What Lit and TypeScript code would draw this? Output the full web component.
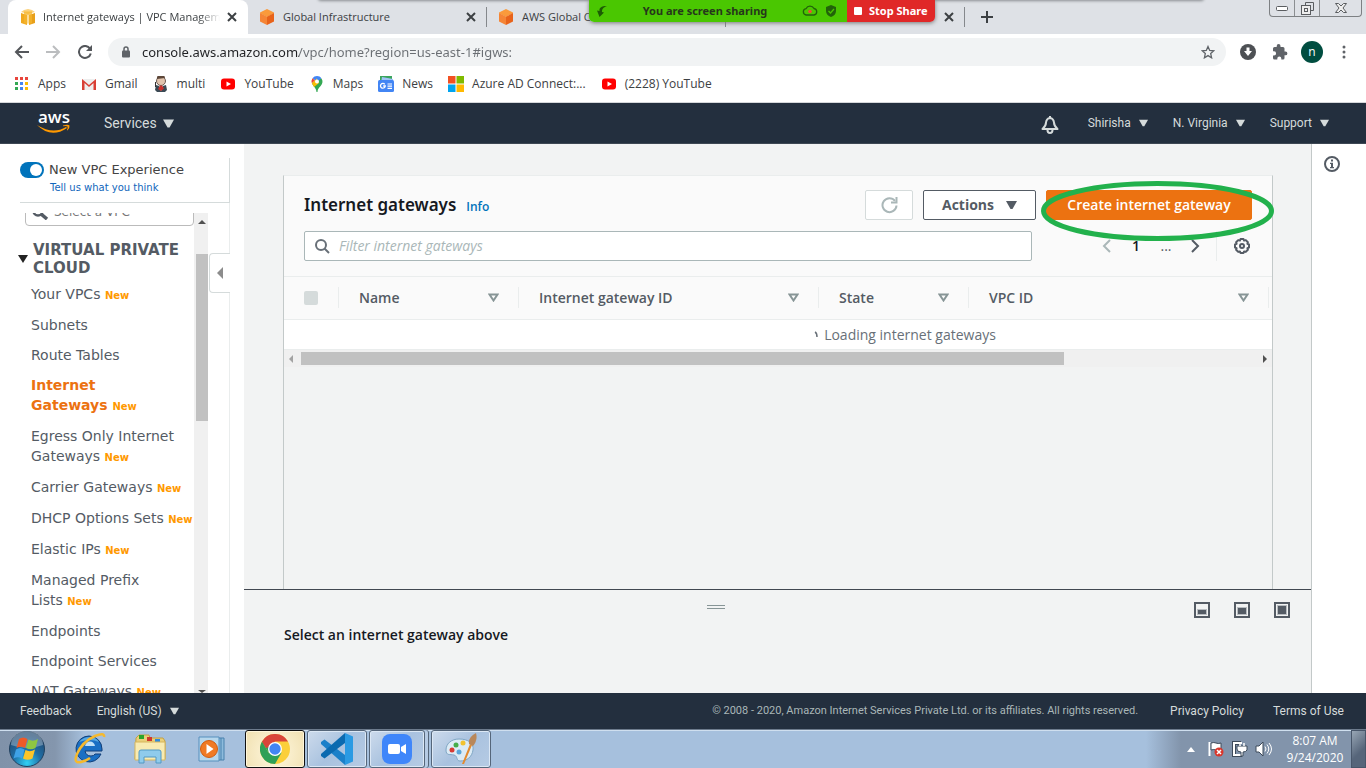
import { LitElement, html, css, svg, nothing } from "lit";
import { customElement, state } from "lit/decorators.js";
import { classMap } from "lit/directives/class-map.js";

const icon = (w: number, h: number, body: unknown) =>
  html`<svg width=${w} height=${h} viewBox="0 0 ${w} ${h}" fill="none" aria-hidden="true">${body}</svg>`;

const caret = (w = 11, h = 8) =>
  html`<svg width=${w} height=${h} viewBox="0 0 11 8" aria-hidden="true"><path d="M0 0h11L6.5 8h-2z" fill="currentColor" /></svg>`;

const sortCaret = () => icon(11, 9, svg`<path d="M1.5 1.5h8l-4 6z" stroke="#879596" stroke-width="2"/>`);

const closeX = () => icon(10, 10, svg`<path d="M1 1l8 8M9 1l-8 8" stroke="#3c4043" stroke-width="2"/>`);

const cube = (top: string, left: string, right: string) =>
  icon(16, 16, svg`<path d="M8 0l7 3.6v.6L8 8 1 4.2v-.6z" fill=${top}/><path d="M1 4l7 3.8V16l-7-3.6z" fill=${left}/><path d="M15 4L8 7.800V16l7-3.600z" fill=${right}/>`);

const awsCube = () => cube("#fa9a3b", "#f58536", "#e8631b");

const vpcBox = () =>
  icon(16, 16, svg`<path d="M1 3l3-2 4-1 4 1 3 2-7 2z" fill="#fbd27c"/><path d="M1 4l6 2v10l-6-2z" fill="#f0a91f"/><path d="M15 4L9 6v10l6-2z" fill="#e8a01a"/><path d="M4 2.500h8v12H4z" fill="#f5b62f" opacity=".75"/><path d="M7.500 6h1v9h-1z" fill="#fff2cf"/>`);

const youtube = () =>
  icon(16, 16, svg`<rect x="1" y="2.500" width="14" height="11" rx="3" fill="#f00"/><path d="M6.500 5.500v5L11 8z" fill="#fff"/>`);

const bookmarks: { label: string; gap: string; glyph: () => unknown }[] = [
  {
    label: "Apps",
    gap: "g0",
    glyph: () =>
      icon(14, 14, [
        ["#e8453c", 1, 0], ["#e8453c", 6, 0], ["#e8453c", 11, 0],
        ["#34a853", 1, 5], ["#4285f4", 6, 5], ["#fbbc04", 11, 5],
        ["#34a853", 1, 10], ["#4285f4", 6, 10], ["#fbbc04", 11, 10],
      ].map(([c, x, y]) => svg`<rect x=${x} y=${y} width="3" height="3" fill=${c}/>`)),
  },
  {
    label: "Gmail",
    gap: "g1",
    glyph: () =>
      icon(16, 16, svg`<path d="M1 3h14v11H1z" fill="#eee"/><path d="M1 14V3l7 6 7-6v11h-2.500V7L8 11 3.500 7v7z" fill="#d93f35"/>`),
  },
  {
    label: "multi",
    gap: "g1",
    glyph: () =>
      icon(16, 16, svg`<circle cx="8" cy="5" r="4.500" fill="#e2c4ae" stroke="#6b5a52"/><path d="M4 3a4 4 0 018-1l-4 .5z" fill="#5c4638"/><path d="M3 9l3 1 2 5 2-5 3-1 1 5-2 2H4l-2-2z" fill="#3b4a55"/><path d="M7 9.500h2l2 3-3 2.500-3-2z" fill="#c9302c"/><path d="M2.500 6v5" stroke="#333"/>`),
  },
  { label: "YouTube", gap: "g1", glyph: youtube },
  {
    label: "Maps",
    gap: "g1",
    glyph: () =>
      icon(16, 16, svg`<path d="M8 0a5.500 5.500 0 00-4.500 2.300L8 6z" fill="#4285f4"/><path d="M3.500 2.300a5.500 5.500 0 00-.6 5L6 4.500z" fill="#ea4335"/><path d="M2.900 7.300L12 1.900a5.500 5.500 0 01.9 6C11.500 11 8.800 11.500 8.500 16h-1C7.300 12 4.500 11 2.900 7.300z" fill="#34a853"/><path d="M2.900 7.300l5-4.800L10 7l-5 4z" fill="#fbbc04"/><path d="M8 0c2 0 3.400.8 4.300 2.200L8 6z" fill="#4285f4"/><circle cx="8" cy="5.500" r="2" fill="#fff"/>`),
  },
  {
    label: "News",
    gap: "g1",
    glyph: () =>
      icon(16, 16, svg`<path d="M2 0h12v5H2z" fill="#3ba55d"/><path d="M4 1l11 2v4H3z" fill="#9fc2f7"/><rect y="4" width="16" height="12" rx="1.500" fill="#4285f4"/><path d="M6.800 8.300A2.400 2.400 0 107.300 10H5.200" stroke="#fff" stroke-width="1.300"/><path d="M9.500 8h4.500M9.500 10.200h4.500M9.500 12.400h4.500" stroke="#fff" stroke-width="1.200"/>`),
  },
  {
    label: "Azure AD Connect:...",
    gap: "g1",
    glyph: () =>
      icon(16, 16, svg`<path d="M0 0h7.500v7.500H0z" fill="#f25022"/><path d="M8.500 0H16v7.500H8.500z" fill="#7fba00"/><path d="M0 8.500h7.500V16H0z" fill="#00a4ef"/><path d="M8.500 8.500H16V16H8.500z" fill="#ffb900"/>`),
  },
  { label: "(2228) YouTube", gap: "g1", glyph: youtube },
];

const links: { label: string; fresh?: boolean; current?: boolean }[] = [
  { label: "Your VPCs", fresh: true },
  { label: "Subnets" },
  { label: "Route Tables" },
  { label: "Internet Gateways", fresh: true, current: true },
  { label: "Egress Only Internet Gateways", fresh: true },
  { label: "Carrier Gateways", fresh: true },
  { label: "DHCP Options Sets", fresh: true },
  { label: "Elastic IPs", fresh: true },
  { label: "Managed Prefix Lists", fresh: true },
  { label: "Endpoints" },
  { label: "Endpoint Services" },
  { label: "NAT Gateways", fresh: true },
];

const columns = [
  { label: "Name", cls: "c-name" },
  { label: "Internet gateway ID", cls: "c-id" },
  { label: "State", cls: "c-state" },
  { label: "VPC ID", cls: "c-vpc" },
];

const reset = css`
  *, *::before, *::after { box-sizing: border-box; }
  button, input { font: inherit; color: inherit; margin: 0; }
  button { background: none; border: 0; padding: 0; display: flex; align-items: center; cursor: pointer; white-space: nowrap; }
  a { color: inherit; text-decoration: none; }
  svg { display: block; flex: none; }
  h1, h2, p, ul { margin: 0; padding: 0; list-style: none; }
`;

@customElement("browser-chrome")
class BrowserChrome extends LitElement {
  static styles = [reset, css`
    :host { display: block; position: relative; flex: none; font: 12px/16px "Open Sans", "Noto Sans", sans-serif; color: #3c4043; background: #fff; border-bottom: 1px solid #d5d7da; }
    .tabs { display: flex; height: 34px; background: #dee1e6; padding-left: 8px; align-items: center; }
    .tab { flex: 0 1 239px; min-width: 0; height: 34px; display: flex; align-items: center; gap: 8px; padding: 0 11px 0 11px; position: relative; }
    .tab.on { flex-basis: 240px; background: #fff; border-radius: 8px 8px 0 0; padding-left: 12px; gap: 7px; }
    .tab.sep::after { content: ""; position: absolute; right: 0; top: 7px; width: 1px; height: 20px; background: #85888c; }
    .name { flex: 1; overflow: hidden; white-space: nowrap; font-size: 11px; }
    .on .name { -webkit-mask-image: linear-gradient(90deg, #000 88%, transparent); mask-image: linear-gradient(90deg, #000 88%, transparent); }
    .plus { padding: 0 16px; }
    .window { position: absolute; right: 4px; top: 0; display: flex; border: 1px solid #7d8083; border-top: 0; border-radius: 0 0 4px 4px; height: 17px; }
    .window button { width: 25px; justify-content: center; border-right: 1px solid #8b8e91; }
    .window button:last-child { width: 41px; border: 0; }
    .drop { position: absolute; left: 318px; right: 162px; top: -6px; height: 6px; box-shadow: 0 1px 3px #8a8d91; border-radius: 4px; }
    .share { position: absolute; left: 589px; top: 0; height: 22px; display: flex; border-radius: 0 0 5px 5px; overflow: hidden; font: 700 11px/16px "Noto Sans", sans-serif; box-shadow: 0 1px 4px #777; }
    .live { width: 258px; background: #4ac701; color: #26371c; display: flex; align-items: center; padding: 0 11px 0 7px; }
    .live span { flex: 1; text-align: center; }
    .live .pair { display: flex; gap: 8px; }
    .stop { width: 88px; background: #e02828; color: #fff; padding-left: 7px; gap: 7px; }
    .bar { display: flex; align-items: center; height: 36px; padding: 0 6px 0 14px; }
    .back { width: 32px; }
    .reload { width: 30px; }
    .omni { flex: 1; display: flex; align-items: center; gap: 12px; height: 28px; border-radius: 14px; background: #f1f3f4; padding: 0 11px 0 14px; margin-right: 6px; }
    .url { flex: 1; min-width: 0; height: 24px; border: 0; outline: 0; padding: 0; font: 13px/24px "Noto Sans", sans-serif; color: transparent; background: linear-gradient(90deg, #202124 157px, #6a6e73 157px); -webkit-background-clip: text; background-clip: text; }
    .tools { display: flex; align-items: center; }
    .tools button { justify-content: center; width: 32px; }
    .tools .me { width: 22px; height: 22px; margin: 0 5px; border-radius: 50%; background: #004d40; color: #fff; }
    .marks { display: flex; height: 32px; align-items: center; padding: 0 0 4px 14px; }
    .marks a { display: flex; align-items: center; gap: 8px; white-space: nowrap; }
    .marks .g0 { gap: 10px; }
    .marks .g1 { margin-left: 15px; }
  `];

  render() {
    return html`
      <div class="tabs">
        <div class="tab on">${vpcBox()}<span class="name">Internet gateways | VPC Management</span><button aria-label="Close tab">${closeX()}</button></div>
        <div class="tab sep">${awsCube()}<span class="name">Global Infrastructure</span><button aria-label="Close tab">${closeX()}</button></div>
        <div class="tab sep">${awsCube()}<span class="name">AWS Global Cloud</span></div>
        <div class="tab sep"><span class="name"></span><button aria-label="Close tab">${closeX()}</button></div>
        <button class="plus" aria-label="New tab">${icon(12, 12, svg`<path d="M6 0v12M0 6h12" stroke="#3c4043" stroke-width="2"/>`)}</button>
      </div>
      <div class="drop"></div>
      <div class="window">
        <button aria-label="Minimize">${icon(12, 6, svg`<rect x=".5" y="1.500" width="11" height="4" rx="1" stroke="#5a5d60" fill="#fff"/>`)}</button>
        <button aria-label="Restore">${icon(13, 13, svg`<path d="M4.500 3.500v-3h8v8h-3" stroke="#5a5d60"/><rect x=".5" y="3.500" width="9" height="9" stroke="#5a5d60" fill="#eee"/><rect x="3.500" y="6.500" width="3" height="3" stroke="#5a5d60"/>`)}</button>
        <button aria-label="Close window">${icon(12, 10, svg`<path d="M.5.5h3L6 3 8.500.5h3L8 5l3.500 4.500h-3L6 7 3.500 9.500h-3L4 5z" stroke="#5a5d60" fill="#eee"/>`)}</button>
      </div>
      <div class="share">
        <div class="live">
          ${icon(12, 11, svg`<path d="M11 0C5 0 3 2 3.500 5L1 4.500 3.500 11 8 6.500 6 6c0-3 1-4.500 5-6z" fill="#1d5c05"/>`)}
          <span>You are screen sharing</span>
          <div class="pair">
            ${icon(16, 11, svg`<path d="M4 10a3.200 3.200 0 010-6.300A4.500 4.500 0 0112 3.500a3.300 3.300 0 010 6.500z" stroke="#22630a" stroke-width="1.300"/><circle cx="8" cy="6.500" r="1.800" fill="#f04a3a"/>`)}
            ${icon(10, 12, svg`<path d="M5 0l5 2v4c0 3-2 5-5 6-3-1-5-3-5-6V2z" fill="#22630a"/><path d="M2.500 6l2 2 3.500-4" stroke="#4ac701" stroke-width="1.300"/>`)}
          </div>
        </div>
        <button class="stop">${icon(8, 8, svg`<rect width="8" height="8" rx="1" fill="#fff"/>`)}Stop Share</button>
      </div>
      <div class="bar">
        <button class="back" aria-label="Back">${icon(16, 14, svg`<path d="M15 7H2M8 1L2 7l6 6" stroke="#54575b" stroke-width="2"/>`)}</button>
        <button class="back" aria-label="Forward">${icon(16, 14, svg`<path d="M0 7h13M7 1l6 6-6 6" stroke="#bbbdbf" stroke-width="2"/>`)}</button>
        <button class="reload" aria-label="Reload">${icon(14, 14, svg`<path d="M12 3.600A6 6 0 1012.800 8.500" stroke="#54575b" stroke-width="2"/><path d="M14 0v6H8z" fill="#54575b"/>`)}</button>
        <div class="omni">
          ${icon(8, 12, svg`<path d="M2 5V3a2 2 0 014 0v2" stroke="#5f6368" stroke-width="1.500"/><rect y="4.500" width="8" height="7" rx="1" fill="#5f6368"/>`)}
          <input class="url" aria-label="Address" spellcheck="false" .value=${"console.aws.amazon.com/vpc/home?region=us-east-1#igws:"} />
          <button aria-label="Bookmark this page">${icon(14, 14, svg`<path d="M7 1.500l1.700 3.900 4.100.4-3.100 2.800.9 4.200L7 10.600l-3.600 2.200.9-4.200-3.100-2.800 4.100-.4z" stroke="#5f6368" stroke-width="1.300"/>`)}</button>
        </div>
        <div class="tools">
          <button aria-label="Downloads">${icon(16, 16, svg`<circle cx="8" cy="8" r="8" fill="#4d5054"/><path d="M6.500 3.500h3V7H12l-4 5-4-5h2.500z" fill="#fff"/>`)}</button>
          <button aria-label="Extensions">${icon(16, 16, svg`<path d="M13.500 7.500h-1V4.500A1.500 1.500 0 0011 3H8.500V2a1.900 1.900 0 00-3.800 0v1H2.500A1.500 1.500 0 001 4.500V7.300h1a2.100 2.100 0 010 4.200H1V14a1.500 1.500 0 001.500 1.500h2.800v-1a2 2 0 014 0v1H11a1.500 1.500 0 001.500-1.500v-2.700h1a1.900 1.900 0 000-3.800z" fill="#5f6368"/>`)}</button>
          <button class="me" aria-label="Profile">n</button>
          <button aria-label="Menu">${icon(4, 14, svg`<circle cx="2" cy="2" r="1.500" fill="#5f6368"/><circle cx="2" cy="7" r="1.500" fill="#5f6368"/><circle cx="2" cy="12" r="1.500" fill="#5f6368"/>`)}</button>
        </div>
      </div>
      <nav class="marks">
        ${bookmarks.map((b) => html`<a href="#" class=${b.gap}>${b.glyph()}<span>${b.label}</span></a>`)}
      </nav>
    `;
  }
}

@customElement("vpc-sidebar")
class VpcSidebar extends LitElement {
  static styles = [reset, css`
    :host { display: flex; flex-direction: column; flex: none; width: 244px; background: #fff; font: 14px/20px "DejaVu Sans", Verdana, sans-serif; color: #545b64; padding: 14px 14px 0 20px; min-height: 0; }
    .exp { border: solid #d5dbdb; border-width: 0 1px 1px 0; height: 45px; font-size: 13px; line-height: 18px; color: #444; }
    .row { display: flex; gap: 5px; align-items: center; padding-top: 3px; }
    .toggle { appearance: none; width: 24px; height: 16px; border-radius: 8px; background: #0073bb; position: relative; }
    .toggle::before { content: ""; position: absolute; right: 2px; top: 2px; width: 12px; height: 12px; border-radius: 50%; background: #fff; }
    .tell { display: block; margin-left: 30px; font-size: 10px; line-height: 18px; color: #1166bb; }
    .lower { flex: 1; min-height: 0; display: flex; border-right: 1px solid #eaeded; padding-top: 10px; }
    .pane { flex: none; width: 178px; overflow: hidden; margin-left: -4px; padding-left: 2px; }
    .pick { display: flex; align-items: center; gap: 5px; height: 28px; margin: -15px 0 0 7px; padding-left: 6px; border: 1px solid #bbb; border-radius: 4px; }
    .pick input { border: 0; padding: 0; outline: 0; width: 120px; font-size: 12px; background: none; }
    .pick input::placeholder { color: #777; opacity: 1; }
    .head { display: flex; align-items: center; gap: 5px; margin-top: 15px; font-size: 15px; line-height: 18px; font-weight: 700; color: #545b64; }
    .list { padding-left: 13px; margin-top: 7px; display: flex; flex-direction: column; gap: 10px; }
    .list a { display: block; }
    .list .fresh { padding-bottom: 1px; }
    .list .on { color: #ec7211; font-weight: 700; padding-right: 60px; }
    .new { color: #ff9900; font-size: 10px; line-height: 10px; font-weight: 700; }
    .scroll { flex: none; width: 14px; background: #f0f0f0; display: flex; flex-direction: column; align-items: flex-end; padding: 7px 0 0; overflow: hidden; }
    .scroll svg { margin-right: 2px; }
    .thumb { width: 12px; height: 167px; margin: 30px 0 auto; background: #c1c1c1; }
    .fold { flex: none; margin: 40px -1px 0 1px; width: 21px; height: 40px; border: 1px solid #d5dbdb; border-right: 0; border-radius: 4px 0 0 4px; justify-content: center; background: #fff; }
  `];

  @state() private fresh = true;

  render() {
    return html`
      <div class="exp">
        <label class="row"><input class="toggle" type="checkbox" .checked=${this.fresh} />New VPC Experience</label>
        <a class="tell" href="#">Tell us what you think</a>
      </div>
      <div class="lower">
        <div class="pane">
          <label class="pick">
            ${icon(17, 15, svg`<circle cx="6" cy="6" r="4.500" stroke="#545b64" stroke-width="2.500"/><path d="M9 9l6 5" stroke="#545b64" stroke-width="3.500"/>`)}
            <input placeholder="Select a VPC" aria-label="Select a VPC" />
          </label>
          <h2 class="head">${icon(10, 8, svg`<path d="M0 0h10L5 8z" fill="#222"/>`)}<span>VIRTUAL PRIVATE CLOUD</span></h2>
          <ul class="list">
            ${links.map((l) => html`<li><a href="#" class=${classMap({ on: !!l.current, fresh: !!l.fresh })}>${l.label}${l.fresh ? html`&nbsp;<span class="new">New</span>` : nothing}</a></li>`)}
          </ul>
        </div>
        <div class="scroll">
          ${icon(8, 4, svg`<path d="M4 0l4 4H0z" fill="#505050"/>`)}
          <div class="thumb"></div>
          ${icon(8, 3, svg`<path d="M0 0h8L4 3z" fill="#505050"/>`)}
        </div>
        <button class="fold" aria-label="Collapse navigation">${icon(6, 12, svg`<path d="M6 0v12L0 6z" fill="#8c8c8c"/>`)}</button>
      </div>
    `;
  }
}

@customElement("gateway-panel")
class GatewayPanel extends LitElement {
  static styles = [reset, css`
    :host { display: flex; flex-direction: column; flex: 1; min-width: 0; min-height: 0; background: #f2f3f3; font: 14px/20px "Open Sans", "Noto Sans", sans-serif; color: #545b64; }
    .upper { flex: 1; min-height: 0; padding: 31px 38px 0 39px; display: flex; }
    .card { flex: 1; min-width: 0; border: 1px solid #c3c9c9; border-top-color: #eaeded; border-bottom: 0; }
    .top { background: #fafafa; padding: 14px 20px 15px; border-bottom: 1px solid #eaeded; }
    .titles { display: flex; align-items: center; gap: 10px; }
    .titles h1 { font: 600 17px/24px "Noto Sans", sans-serif; color: #16191f; }
    .info { flex: 1; font-size: 12px; font-weight: 600; color: #0073bb; padding-top: 3px; }
    .btn { height: 30px; border: 1px solid #545b64; border-radius: 2px; background: #fff; font-weight: 700; justify-content: center; }
    .refresh { width: 48px; border-color: #d5dbdb; }
    .act { width: 113px; gap: 12px; }
    .hot { position: relative; }
    .create { width: 206px; background: #ec7211; border-color: #ec7211; color: #fff; font-weight: 600; }
    .ring { position: absolute; left: -5px; top: -9px; z-index: 2; pointer-events: none; }
    .filters { display: flex; align-items: center; margin-top: 11px; }
    .find { flex: 0 1 728px; display: flex; align-items: center; gap: 9px; height: 30px; padding: 0 10px; border: 1px solid #aab7b8; border-radius: 2px; background: #fff; }
    .find input { flex: 1; border: 0; outline: 0; padding: 0; background: none; }
    .find input::placeholder { color: #aab7b8; opacity: 1; font-style: italic; }
    .pager { flex: 1; display: flex; align-items: center; justify-content: flex-end; }
    .pager b { width: 30px; text-align: center; font-weight: 600; color: #16191f; margin-left: 10px; }
    .pager i { width: 30px; text-align: center; font-style: normal; }
    .pager .next { margin: 0 16px 0 10px; }
    .pager .gear { border-left: 1px solid #eaeded; height: 30px; padding-left: 17px; margin-right: 2px; }
    .clip { overflow: hidden; background: #fff; border-bottom: 1px solid #eaeded; }
    table { width: 1242px; table-layout: fixed; border-collapse: collapse; }
    .c-box { width: 55px; } .c-name { width: 180px; } .c-id { width: 300px; } .c-state { width: 150px; } .c-vpc { width: 300px; }
    thead tr { background: #fafafa; border-bottom: 1px solid #eaeded; }
    th { padding: 10px 0 11px; font-weight: 600; text-align: left; }
    .cell { display: flex; align-items: center; justify-content: space-between; height: 21px; padding: 0 19px 0 20px; border-right: 1px solid #eaeded; }
    .box { appearance: none; display: block; width: 14px; height: 14px; border-radius: 2px; background: #d5dbdb; }
    td { height: 29px; padding: 0; color: #687078; }
    .wait { display: flex; justify-content: center; align-items: center; gap: 6px; line-height: 29px; }
    .track { display: flex; align-items: center; justify-content: space-between; height: 17px; background: #f0f0f0; padding: 0 5px; }
    .grow { flex: 1; padding: 0 8px; }
    .thumb { width: 80%; height: 13px; background: #c1c1c1; }
    .split { border-top: 1px solid #414750; height: 104px; padding: 12px 21px 0 40px; }
    .grip { display: flex; justify-content: flex-end; align-items: flex-start; height: 16px; gap: 24px; }
    .grip .bar { margin-right: 445px; padding-top: 2px; }
    .split p { margin-top: 7px; font-weight: 600; color: #16191f; }
  `];

  render() {
    return html`
      <section class="upper">
        <div class="card">
          <header class="top">
            <div class="titles">
              <h1>Internet gateways</h1>
              <a class="info" href="#">Info</a>
              <button class="btn refresh" aria-label="Refresh">${icon(17, 17, svg`<path d="M14 3.800A7 7 0 1015.500 8.500" stroke="#aab7b8" stroke-width="2"/><path d="M15.500 0v5.500H10" stroke="#aab7b8" stroke-width="2"/>`)}</button>
              <button class="btn act">Actions ${caret()}</button>
              <div class="hot">
                <button class="btn create">Create internet gateway</button>
                <svg class="ring" width="234" height="61" viewBox="0 0 234 61" fill="none" aria-hidden="true"><ellipse cx="116.500" cy="30" rx="114" ry="27.500" stroke="#22b14c" stroke-width="5" /></svg>
              </div>
            </div>
            <div class="filters">
              <label class="find">${icon(15, 15, svg`<circle cx="6" cy="6" r="5" stroke="#687078" stroke-width="2"/><path d="M9.500 9.500l4.500 4.500" stroke="#687078" stroke-width="2"/>`)}<input placeholder="Filter internet gateways" aria-label="Filter internet gateways" /></label>
              <div class="pager">
                <button aria-label="Previous page">${icon(9, 14, svg`<path d="M8 1L2 7l6 6" stroke="#aab7b8" stroke-width="2"/>`)}</button>
                <b>1</b><i>...</i>
                <button class="next" aria-label="Next page">${icon(9, 14, svg`<path d="M1 1l6 6-6 6" stroke="#545b64" stroke-width="2"/>`)}</button>
                <button class="gear" aria-label="Preferences">${icon(16, 16, svg`<path d="M6.500 1h3l.6 1.600 1.700-.5 2.100 2.100-.5 1.700 1.600.6v3l-1.600.6.5 1.700-2.100 2.100-1.700-.5L9.500 15h-3l-.6-1.600-1.700.5-2.100-2.100.5-1.700L1 9.500v-3l1.600-.6-.5-1.700 2.100-2.100 1.700.5z" stroke="#545b64" stroke-width="2" stroke-linejoin="round"/><circle cx="8" cy="8" r="2" stroke="#545b64" stroke-width="2"/>`)}</button>
              </div>
            </div>
          </header>
          <div class="clip">
            <table>
              <thead>
                <tr>
                  <th class="c-box"><div class="cell"><input class="box" type="checkbox" disabled aria-label="Select all" /></div></th>
                  ${columns.map((c) => html`<th class=${c.cls}><div class="cell">${c.label}${sortCaret()}</div></th>`)}
                  <th></th>
                </tr>
              </thead>
              <tbody>
                <tr><td colspan="6"><div class="wait">${icon(4, 8, svg`<path d="M1 1q2 1 2 5" stroke="#687078" stroke-width="1.500"/>`)}Loading internet gateways</div></td></tr>
              </tbody>
            </table>
          </div>
          <div class="track">
            ${icon(4, 8, svg`<path d="M4 0v8L0 4z" fill="#a3a3a3"/>`)}
            <div class="grow"><div class="thumb"></div></div>
            ${icon(4, 8, svg`<path d="M0 0v8l4-4z" fill="#505050"/>`)}
          </div>
        </div>
      </section>
      <section class="split">
        <div class="grip">
          <span class="bar">${icon(18, 6, svg`<path d="M0 1.500h18M0 4.500h18" stroke="#879596"/>`)}</span>
          ${[[8, 5], [6, 7], [4, 9]].map(([y, h]) => html`<button aria-label="Panel size">${icon(16, 16, svg`<rect x="1" y="1" width="14" height="14" stroke="#545b64" stroke-width="2"/><rect x="3" y=${y - 1} width="10" height=${h + 1} fill="#b9bdc1"/><rect x="4" y=${y} width="8" height=${h - 1} fill="#545b64"/>`)}</button>`)}
        </div>
        <p>Select an internet gateway above</p>
      </section>
    `;
  }
}

@customElement("task-bar")
class TaskBar extends LitElement {
  static styles = [reset, css`
    :host { display: flex; flex: none; height: 39px; align-items: stretch; border-top: 1px solid #6d7b8c; box-shadow: inset 0 1px #cfdfef; font: 12px/17px "Open Sans", "Noto Sans", sans-serif; color: #fff; background: linear-gradient(90deg, #8092a9 0, #8496ad 55px, #a6c0dd 85px, #a6c0dd calc(100% - 220px), #8294ab calc(100% - 185px), #8294ab 100%); }
    button { justify-content: center; }
    .start { width: 54px; }
    .pin { width: 64px; }
    .pin.ie { padding-left: 6px; }
    .pin.last { width: 60px; margin-right: 3px; }
    .app { width: 60px; margin-right: 2px; border: 1px solid #55667a; border-radius: 3px; background: linear-gradient(135deg, #cddbec, #a9c2df 50%, #b6cbe4); box-shadow: inset 0 0 0 1px #dce8f5; }
    .app.on { border-color: #111; background: radial-gradient(circle at 50% 60%, #fff8e0, #f0e0b0); box-shadow: inset 0 0 0 1px #fff6da; }
    .app.stack { width: 56px; margin-right: 6px; box-shadow: inset 0 0 0 1px #dce8f5, 3px 0 0 #b6cbe4, 4px 0 0 #55667a; }
    .tray { margin-left: auto; display: flex; align-items: center; gap: 7px; }
    .up { margin-right: 5px; }
    .clock { width: 72px; text-align: center; }
    .peek { width: 15px; border: 1px solid #48566a; background: linear-gradient(135deg, #98a6b5, #56657a 60%); }
  `];

  render() {
    return html`
      <button class="start" aria-label="Start">${icon(38, 38, svg`
        <defs><radialGradient id="o" cx=".5" cy=".9" r=".8"><stop offset="0" stop-color="#31d1f5"/><stop offset=".5" stop-color="#1f6ea5"/><stop offset="1" stop-color="#234b73"/></radialGradient></defs>
        <circle cx="19" cy="19" r="17.500" fill="url(#o)" stroke="#21415f"/><path d="M3 15a16 14 0 0132 0q-16 6-32 0z" fill="#fff" opacity=".3"/>
        <path d="M11 9q4-3 8.500 0l-2.500 9q-4-2.500-8.500 0z" fill="#ee5a28"/><path d="M20.500 9.500q4.500 2.500 9.500-.5l-2.500 9q-5 2.500-9.500 0z" fill="#8ec641"/><path d="M8 19.500q4-3 8.500 0L14 28.500q-4-2.500-8.500 0z" fill="#3fa2e6"/><path d="M17.500 20q4.500 2.500 9.500-.5l-2.500 9q-5 2.500-9.500 0z" fill="#fcc528"/>`)}</button>
      <button class="pin ie" aria-label="Internet Explorer">${icon(34, 34, svg`
        <path d="M17 4a13 13 0 0113 13v2H13q1 5 6 5 3 0 4-2h6A13 13 0 1117 4z" fill="#1a6fc4" stroke="#123f78"/><path d="M13 14h10q-1-4.500-5-4.500T13 14z" fill="#bfe0f7"/><path d="M7 10Q11 5 18 5q6 0 9 5-9-4-20 0z" fill="#6fc0f0" opacity=".7"/><path d="M32 5q1-5-9-1Q10 10 5 22q-4 10 4 8 5-1 9-4" stroke="#f5b92e" stroke-width="2.500"/>`)}</button>
      <button class="pin" aria-label="Explorer">${icon(32, 30, svg`
        <path d="M2 4l3-3h10l1 3h13l2 3v18H1z" fill="#e9cf79" stroke="#c3a043"/><path d="M5 1h5v4H5z" fill="#2aa52a"/><path d="M13 3h5v4h-5z" fill="#d0382b"/><path d="M21 5h5v4h-5z" fill="#2c8be0"/><path d="M1 8h30v18H1z" fill="#f8ebb2" stroke="#d5b55d"/><path d="M5 29V18q0-2 2-2h18q2 0 2 2v11h-5v-6H10v6z" fill="#8fcbec" stroke="#5299c4"/>`)}</button>
      <button class="pin last" aria-label="Media Player">${icon(28, 26, svg`
        <path d="M20 2h6v22h-6z" fill="#8dbbdc" stroke="#4981ad"/><path d="M23 2v22" stroke="#4981ad"/><path d="M1 1h20v24H1z" fill="#b7d7ec" stroke="#5690bd"/><circle cx="11" cy="13" r="8.500" fill="#f07a24" stroke="#d15d10"/><path d="M8.500 8v10l7-5z" fill="#fff"/>`)}</button>
      <button class="app on" aria-label="Chrome">${icon(30, 30, svg`
        <circle cx="15" cy="15" r="15" fill="#fbcf3b"/><path d="M2 7.500A15 15 0 0015 30l6.500-11.300L15 15 8.500 18.700z" fill="#2fa057"/><path d="M2 7.500l6.500 11.200L15 8z" fill="#2fa057"/><path d="M2 7.500A15 15 0 0128 7.500H15l-7 6-2 .5z" fill="#d9453a"/><circle cx="15" cy="15" r="7" fill="#fff"/><circle cx="15" cy="15" r="5.700" fill="#4285f4"/>`)}</button>
      <button class="app" aria-label="Code">${icon(32, 32, svg`
        <path d="M24 32L0 11V9l3.500-2.500L24 22z" fill="#1b80c9"/><path d="M24 0L0 21v2l3.500 2.500L24 10z" fill="#0b6ab0"/><path d="M24 0l8 3.500v25L24 32z" fill="#2a9ae3"/>`)}</button>
      <button class="app stack" aria-label="Meetings">${icon(30, 30, svg`
        <rect width="30" height="30" rx="8" fill="#3f86fa"/><rect x="6" y="10" width="12" height="10" rx="2" fill="#fff"/><path d="M19 13l5-3v10l-5-3z" fill="#fff"/>`)}</button>
      <button class="app" aria-label="Paint">${icon(32, 32, svg`
        <path d="M14 6c9 0 15 4 14 11s-6 11-13 11c-4 0-2-5-6-6S1 23 1 17 6 6 14 6z" fill="#dcebf5" stroke="#7fa6c4"/><circle cx="7" cy="17" r="2.500" fill="#d83a33"/><circle cx="11" cy="12" r="2.500" fill="#45ad4a"/><circle cx="18" cy="10" r="2.500" fill="#f2c22e"/><circle cx="14" cy="19" r="2.500" fill="#5aa5d9"/><path d="M17 31l8-20 2 1-8 19z" fill="#e38a2e"/><path d="M24 11q-1-7 7-11 2 7-3 13z" fill="#b98759"/>`)}</button>
      <div class="tray">
        <span class="up">${icon(8, 5, svg`<path d="M4 0l4 5H0z" fill="#fff"/>`)}</span>
        ${icon(18, 16, svg`<path d="M2.500 1v14" stroke="#fff" stroke-width="2"/><path d="M4 2q3-1 5 0t5 0v7q-3 1-5 0t-5 0z" fill="#fff" stroke="#3d4a5a"/><circle cx="12" cy="11" r="4.500" fill="#d9372c"/><path d="M10 9l4 4M14 9l-4 4" stroke="#fff" stroke-width="1.500"/>`)}
        ${icon(16, 16, svg`<path d="M9 2H2v13h8" stroke="#3d4a5a" stroke-width="4"/><path d="M10 2H2v12h8" stroke="#fff" stroke-width="2"/><path d="M5 5h10v4q-1 2-4 2v4H9v-4Q5 11 5 8z" fill="#fff" stroke="#3d4a5a"/><path d="M8 2v3M12 2v3" stroke="#fff" stroke-width="1.500"/>`)}
        ${icon(17, 16, svg`<path d="M1 5h3l4-4v14l-4-4H1z" fill="#fff" stroke="#3d4a5a"/><path d="M10 5.500q2 2.500 0 5M12 3.500q3.500 4.500 0 9M14 2q5 6 0 12" stroke="#fff"/>`)}
        <div class="clock">8:07 AM<br />9/24/2020</div>
      </div>
      <button class="peek" aria-label="Show desktop"></button>
    `;
  }
}

@customElement("app-root")
class AppRoot extends LitElement {
  static styles = [reset, css`
    :host { display: flex; flex-direction: column; height: 100vh; overflow: hidden; background: #fff; }
    .bar { flex: none; display: flex; align-items: center; background: #232f3e; color: #d5dbdb; font: 12px/16px Roboto, sans-serif; }
    .nav { height: 41px; border-bottom: 1px solid #3d4753; padding: 0 37px; }
    .logo { width: 67px; color: #fff; }
    .logo svg { overflow: visible; }
    .logo text { font: 600 17px "Open Sans", sans-serif; }
    .bar button { gap: 8px; }
    .nav .services { font-size: 14px; margin-right: auto; gap: 6px; }
    .nav .right { display: flex; align-items: center; gap: 25px; }
    .nav .bell { margin-right: 4px; padding-top: 3px; }
    .main { flex: 1; display: flex; min-height: 0; }
    .rail { width: 55px; border-left: 1px solid #c3c9c9; background: #fff; padding: 12px; }
    .foot { height: 36px; padding: 0 22px 0 20px; }
    .foot .lang { margin-left: 25px; }
    .foot .copy { margin-left: auto; font-size: 11px; color: #aab7b8; }
    .foot .priv { margin: 0 29px 0 32px; }
  `];

  render() {
    return html`
      <browser-chrome></browser-chrome>
      <header class="bar nav">
        <a class="logo" href="#" aria-label="AWS home">
          <svg width="34" height="22" viewBox="0 0 34 22"><text x="1" y="11" fill="#fff">aws</text><path d="M0 13q16 10 29 2l1 1Q14 27 0 13z" fill="#ff9900"/><path d="M26 13.500q5-1.500 6.500 0 .5 2-2 5l-.5-.5q1-2 .5-3.500-1-.8-4.500-.2z" fill="#ff9900"/></svg>
        </a>
        <button class="services">Services ${caret(11, 9)}</button>
        <div class="right">
          <button class="bell" aria-label="Notifications">${icon(18, 18, svg`<path d="M9 2q3.500.5 4 4.500 0 3.500 3.500 6.500h-15Q5 10 5 6.500 5.500 2.500 9 2z" stroke="#d5dbdb" stroke-width="2" stroke-linejoin="round"/><path d="M9 0v3" stroke="#d5dbdb" stroke-width="2"/><path d="M6.500 14a2.500 3 0 005 0" stroke="#d5dbdb" stroke-width="2"/>`)}</button>
          <button>Shirisha ${caret(9, 8)}</button>
          <button>N. Virginia ${caret(9, 8)}</button>
          <button>Support ${caret(9, 8)}</button>
        </div>
      </header>
      <main class="main">
        <vpc-sidebar></vpc-sidebar>
        <gateway-panel></gateway-panel>
        <aside class="rail"><button aria-label="Help">${icon(16, 16, svg`<circle cx="8" cy="8" r="7" stroke="#545b64" stroke-width="2"/><path d="M7 3.500h2v2H7zM6 6.800h3V11h1v1.300H6V11h1V8H6z" fill="#545b64"/>`)}</button></aside>
      </main>
      <footer class="bar foot">
        <a href="#">Feedback</a>
        <button class="lang">English (US) ${caret(9, 8)}</button>
        <span class="copy">© 2008 - 2020, Amazon Internet Services Private Ltd. or its affiliates. All rights reserved.</span>
        <a class="priv" href="#">Privacy Policy</a>
        <a href="#">Terms of Use</a>
      </footer>
      <task-bar></task-bar>
    `;
  }
}
